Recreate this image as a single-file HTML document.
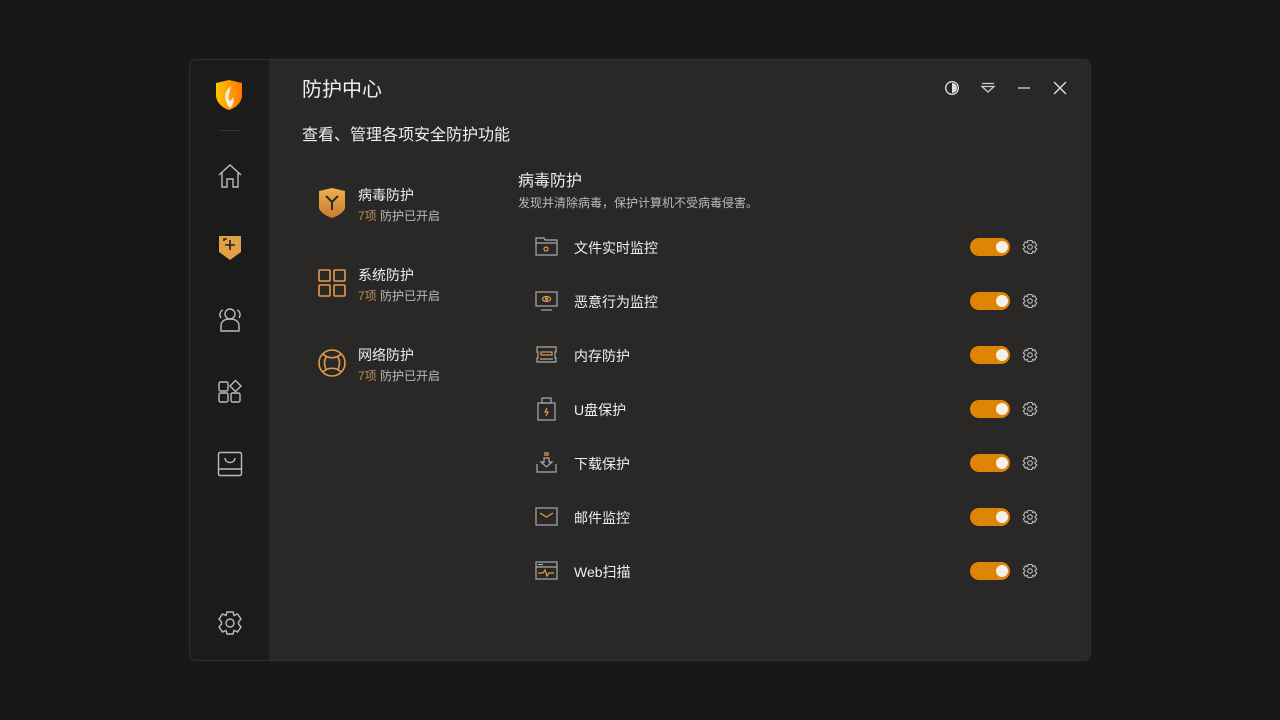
<!DOCTYPE html>
<html><head><meta charset="utf-8"><style>
*{margin:0;padding:0;box-sizing:border-box}
body{width:1280px;height:720px;background:#181818;font-family:"Liberation Sans","Noto Sans CJK SC",sans-serif;position:relative;overflow:hidden}
.win{position:absolute;left:190px;top:60px;width:900px;height:600px;border-radius:6px;background:#292827;overflow:hidden;box-shadow:0 0 0 1px #2f2f2f}
.side{position:absolute;left:0;top:0;width:79px;height:100%;background:#1b1b1b}
.t{position:absolute;color:#eee;white-space:nowrap}
svg{position:absolute}
.row{position:absolute;left:0;width:900px;height:30px}
.tog{position:absolute;left:780px;top:5px;width:40px;height:18px;border-radius:9px;background:#df8506}
.tog:after{content:"";position:absolute;left:26px;top:3px;width:12px;height:12px;border-radius:50%;background:#f5f0ea}
</style></head><body>
<div class="win">
<div class="side">
<svg style="left:25px;top:19px" width="28" height="32" viewBox="0 0 28 32"><defs><linearGradient id="g" x1="0" x2="1"><stop offset="0" stop-color="#ffc400"/><stop offset="1" stop-color="#ff7a00"/></linearGradient></defs><path d="M1 4 L14 1 L27 4 V16 C27 24 20 29 14 31 C8 29 1 24 1 16Z" fill="url(#g)"/><path d="M16 7 C10 12 9 17 11 22 C12 26 14 28 15 29 C18 26 20 22 18 18 C17 21 15 22 14 22 C13 17 15 12 16 7Z" fill="#fbeee0"/></svg>
<div style="position:absolute;left:28px;top:70px;width:23px;height:1px;background:#333"></div>
<svg style="left:27px;top:103px" width="26" height="26" viewBox="0 0 26 26" fill="none" stroke="#bbb" stroke-width="1.4"><path d="M2 12 L13 2 L24 12 M5 9.5 V24 H10 V16 H16 V24 H21 V9.5"/></svg>
<svg style="left:28px;top:175px" width="24" height="26" viewBox="0 0 24 26"><path d="M1 1 H23 V17 L12 25 L1 17Z" fill="#e0a048"/><path d="M6 6 V4 H9 M7 10 H17 M12 5 V15" stroke="#222" stroke-width="1.6" fill="none"/></svg>
<svg style="left:27px;top:246px" width="26" height="26" viewBox="0 0 26 26" fill="none" stroke="#bbb" stroke-width="1.4"><circle cx="13" cy="8" r="5"/><path d="M4 25 V20 C4 15 8 13 13 13 C18 13 22 15 22 20 V25 Z"/><path d="M6 4 C3 5 2 9 4 12 M20 4 C23 5 24 9 22 12"/></svg>
<svg style="left:27px;top:319px" width="26" height="26" viewBox="0 0 26 26" fill="none" stroke="#bbb" stroke-width="1.4"><rect x="2" y="3" width="9" height="9" rx="1.5"/><rect x="2" y="14" width="9" height="9" rx="1.5"/><rect x="14" y="14" width="9" height="9" rx="1.5"/><path d="M18.5 1.5 L24 7 L18.5 12.5 L13 7Z"/></svg>
<svg style="left:27px;top:391px" width="26" height="26" viewBox="0 0 26 26" fill="none" stroke="#bbb" stroke-width="1.4"><rect x="1.5" y="1.5" width="23" height="23" rx="1.5"/><path d="M1.5 18 H24.5 M8 7 C8 13 18 13 18 7"/></svg>
<svg style="left:27px;top:550px" width="26" height="26" viewBox="0 0 26 26" fill="none" stroke="#bbb" stroke-width="1.4"><path d="M10 2 H16 L17 5.5 L20.5 4 L24 9 L21.5 12 V14 L24 17 L20.5 22 L17 20.5 L16 24 H10 L9 20.5 L5.5 22 L2 17 L4.5 14 V12 L2 9 L5.5 4 L9 5.5Z"/><circle cx="13" cy="13" r="4"/></svg>
</div>
<div class="t" style="left:112px;top:13px;font-size:20px">防护中心</div>
<div class="t" style="left:112px;top:61px;font-size:16px">查看、管理各项安全防护功能</div>
<svg style="left:754px;top:20px" width="16" height="16" viewBox="0 0 16 16"><circle cx="8" cy="8" r="6.3" fill="none" stroke="#ddd" stroke-width="1.4"/><path d="M8 3 A5 5 0 0 1 8 13Z" fill="#ddd"/></svg>
<svg style="left:790px;top:20px" width="16" height="16" viewBox="0 0 16 16" fill="none" stroke="#ccc" stroke-width="1.3"><path d="M2 3.5 H14 M2 6.5 H14 L8 12Z"/></svg>
<svg style="left:826px;top:20px" width="16" height="16"><path d="M2 8 H14" stroke="#bbb" stroke-width="1.4"/></svg>
<svg style="left:862px;top:20px" width="16" height="16"><path d="M2 2 L14 14 M14 2 L2 14" stroke="#ddd" stroke-width="1.4"/></svg>

<svg style="left:128px;top:128px" width="28" height="30" viewBox="0 0 28 30"><defs><linearGradient id="o" y1="0" y2="1" x1="0" x2="0"><stop offset="0" stop-color="#f0b050"/><stop offset="1" stop-color="#c77a30"/></linearGradient></defs><path d="M1 3 L14 0 L27 3 V19 C27 24 20 28 14 30 C8 28 1 24 1 19Z" fill="url(#o)"/><path d="M8 8 L14 14 L20 8 M14 14 V22" stroke="#2a2a2a" stroke-width="2" fill="none"/></svg>
<div class="t" style="left:168px;top:125px;font-size:14px">病毒防护</div>
<div class="t" style="left:168px;top:147px;font-size:12px;color:#bbb"><span style="color:#c08a50">7项</span> 防护已开启</div>
<svg style="left:128px;top:209px" width="28" height="28" viewBox="0 0 28 28" fill="none" stroke="#e39a4a" stroke-width="1.6"><rect x="1" y="1" width="11" height="11" rx="1"/><rect x="16" y="1" width="11" height="11" rx="1"/><rect x="1" y="16" width="11" height="11" rx="1"/><rect x="16" y="16" width="11" height="11" rx="1"/></svg>
<div class="t" style="left:168px;top:205px;font-size:14px">系统防护</div>
<div class="t" style="left:168px;top:227px;font-size:12px;color:#bbb"><span style="color:#c08a50">7项</span> 防护已开启</div>
<svg style="left:128px;top:289px" width="28" height="28" viewBox="0 0 28 28" fill="none" stroke="#e39a4a" stroke-width="1.6"><circle cx="14" cy="14" r="13"/><path d="M5 5 C10 10 18 10 23 5 M5 23 C10 18 18 18 23 23 M8 8 C6 12 6 16 8 20 M20 8 C22 12 22 16 20 20"/></svg>
<div class="t" style="left:168px;top:285px;font-size:14px">网络防护</div>
<div class="t" style="left:168px;top:307px;font-size:12px;color:#bbb"><span style="color:#c08a50">7项</span> 防护已开启</div>

<div class="t" style="left:328px;top:107px;font-size:16px">病毒防护</div>
<div class="t" style="left:328px;top:134px;font-size:12px;color:#bbb">发现并清除病毒，保护计算机不受病毒侵害。</div>

<div class="row" style="top:173px"><svg style="left:345px;top:3px" width="24" height="22" viewBox="0 0 24 22" fill="none" stroke="#aaa" stroke-width="1.2"><path d="M1 2 H9 L10 4 H22 V19 H1Z M1 7 H22"/><circle cx="11" cy="13" r="2" stroke="#e39a4a"/></svg><div class="t" style="left:384px;top:5px;font-size:14px">文件实时监控</div><div class="tog"></div><svg style="left:832px;top:6px" width="16" height="16" viewBox="0 0 16 16" fill="none" stroke="#bbb" stroke-width="1.1"><path d="M6 1.5 H10 L10.6 3.6 L12.7 2.8 L14.7 6.2 L13 7.6 V8.4 L14.7 9.8 L12.7 13.2 L10.6 12.4 L10 14.5 H6 L5.4 12.4 L3.3 13.2 L1.3 9.8 L3 8.4 V7.6 L1.3 6.2 L3.3 2.8 L5.4 3.6Z"/><circle cx="8" cy="8" r="2.3"/></svg></div>
<div class="row" style="top:227px"><svg style="left:345px;top:3px" width="24" height="22" viewBox="0 0 24 22" fill="none" stroke="#aaa" stroke-width="1.2"><rect x="1" y="2" width="21" height="14"/><path d="M6 20 H17"/><ellipse cx="11.5" cy="9" rx="4" ry="2.5" stroke="#e39a4a"/><circle cx="11.5" cy="9" r="1" stroke="#e39a4a"/></svg><div class="t" style="left:384px;top:5px;font-size:14px">恶意行为监控</div><div class="tog"></div><svg style="left:832px;top:6px" width="16" height="16" viewBox="0 0 16 16" fill="none" stroke="#bbb" stroke-width="1.1"><path d="M6 1.5 H10 L10.6 3.6 L12.7 2.8 L14.7 6.2 L13 7.6 V8.4 L14.7 9.8 L12.7 13.2 L10.6 12.4 L10 14.5 H6 L5.4 12.4 L3.3 13.2 L1.3 9.8 L3 8.4 V7.6 L1.3 6.2 L3.3 2.8 L5.4 3.6Z"/><circle cx="8" cy="8" r="2.3"/></svg></div>
<div class="row" style="top:281px"><svg style="left:345px;top:3px" width="24" height="22" viewBox="0 0 24 22" fill="none" stroke="#aaa" stroke-width="1.2"><path d="M2 3 H21 V8 H20 V14 H21 V18 H2 V14 H3 V8 H2Z M5 15 H18"/><rect x="6" y="8" width="11" height="3" stroke="#e39a4a"/></svg><div class="t" style="left:384px;top:5px;font-size:14px">内存防护</div><div class="tog"></div><svg style="left:832px;top:6px" width="16" height="16" viewBox="0 0 16 16" fill="none" stroke="#bbb" stroke-width="1.1"><path d="M6 1.5 H10 L10.6 3.6 L12.7 2.8 L14.7 6.2 L13 7.6 V8.4 L14.7 9.8 L12.7 13.2 L10.6 12.4 L10 14.5 H6 L5.4 12.4 L3.3 13.2 L1.3 9.8 L3 8.4 V7.6 L1.3 6.2 L3.3 2.8 L5.4 3.6Z"/><circle cx="8" cy="8" r="2.3"/></svg></div>
<div class="row" style="top:335px"><svg style="left:345px;top:1px" width="24" height="26" viewBox="0 0 24 26" fill="none" stroke="#aaa" stroke-width="1.2"><rect x="7" y="2" width="9" height="5"/><rect x="3" y="7" width="17" height="17"/><path d="M12 12 L10 16 H13 L11 20" stroke="#e39a4a"/></svg><div class="t" style="left:384px;top:5px;font-size:14px">U盘保护</div><div class="tog"></div><svg style="left:832px;top:6px" width="16" height="16" viewBox="0 0 16 16" fill="none" stroke="#bbb" stroke-width="1.1"><path d="M6 1.5 H10 L10.6 3.6 L12.7 2.8 L14.7 6.2 L13 7.6 V8.4 L14.7 9.8 L12.7 13.2 L10.6 12.4 L10 14.5 H6 L5.4 12.4 L3.3 13.2 L1.3 9.8 L3 8.4 V7.6 L1.3 6.2 L3.3 2.8 L5.4 3.6Z"/><circle cx="8" cy="8" r="2.3"/></svg></div>
<div class="row" style="top:389px"><svg style="left:345px;top:1px" width="24" height="26" viewBox="0 0 24 26" fill="none" stroke="#aaa" stroke-width="1.2"><path d="M9 3 H14 M9 5 H14" stroke="#e39a4a"/><path d="M9 8 H14 V12 H17 L11.5 17 L6 12 H9Z M2 14 V22 H21 V14"/></svg><div class="t" style="left:384px;top:5px;font-size:14px">下载保护</div><div class="tog"></div><svg style="left:832px;top:6px" width="16" height="16" viewBox="0 0 16 16" fill="none" stroke="#bbb" stroke-width="1.1"><path d="M6 1.5 H10 L10.6 3.6 L12.7 2.8 L14.7 6.2 L13 7.6 V8.4 L14.7 9.8 L12.7 13.2 L10.6 12.4 L10 14.5 H6 L5.4 12.4 L3.3 13.2 L1.3 9.8 L3 8.4 V7.6 L1.3 6.2 L3.3 2.8 L5.4 3.6Z"/><circle cx="8" cy="8" r="2.3"/></svg></div>
<div class="row" style="top:443px"><svg style="left:345px;top:3px" width="24" height="22" viewBox="0 0 24 22" fill="none" stroke="#aaa" stroke-width="1.2"><rect x="1" y="2" width="21" height="17"/><path d="M5 7 L11.5 11 L18 7" stroke="#e39a4a"/></svg><div class="t" style="left:384px;top:5px;font-size:14px">邮件监控</div><div class="tog"></div><svg style="left:832px;top:6px" width="16" height="16" viewBox="0 0 16 16" fill="none" stroke="#bbb" stroke-width="1.1"><path d="M6 1.5 H10 L10.6 3.6 L12.7 2.8 L14.7 6.2 L13 7.6 V8.4 L14.7 9.8 L12.7 13.2 L10.6 12.4 L10 14.5 H6 L5.4 12.4 L3.3 13.2 L1.3 9.8 L3 8.4 V7.6 L1.3 6.2 L3.3 2.8 L5.4 3.6Z"/><circle cx="8" cy="8" r="2.3"/></svg></div>
<div class="row" style="top:497px"><svg style="left:345px;top:3px" width="24" height="22" viewBox="0 0 24 22" fill="none" stroke="#aaa" stroke-width="1.2"><rect x="1" y="2" width="21" height="17"/><path d="M1 7 H22 M3 4.5 H8"/><path d="M3 13 H8 L10 10 L12 16 L14 13 H19" stroke="#e39a4a"/></svg><div class="t" style="left:384px;top:5px;font-size:14px">Web扫描</div><div class="tog"></div><svg style="left:832px;top:6px" width="16" height="16" viewBox="0 0 16 16" fill="none" stroke="#bbb" stroke-width="1.1"><path d="M6 1.5 H10 L10.6 3.6 L12.7 2.8 L14.7 6.2 L13 7.6 V8.4 L14.7 9.8 L12.7 13.2 L10.6 12.4 L10 14.5 H6 L5.4 12.4 L3.3 13.2 L1.3 9.8 L3 8.4 V7.6 L1.3 6.2 L3.3 2.8 L5.4 3.6Z"/><circle cx="8" cy="8" r="2.3"/></svg></div>
</div>
</body></html>
